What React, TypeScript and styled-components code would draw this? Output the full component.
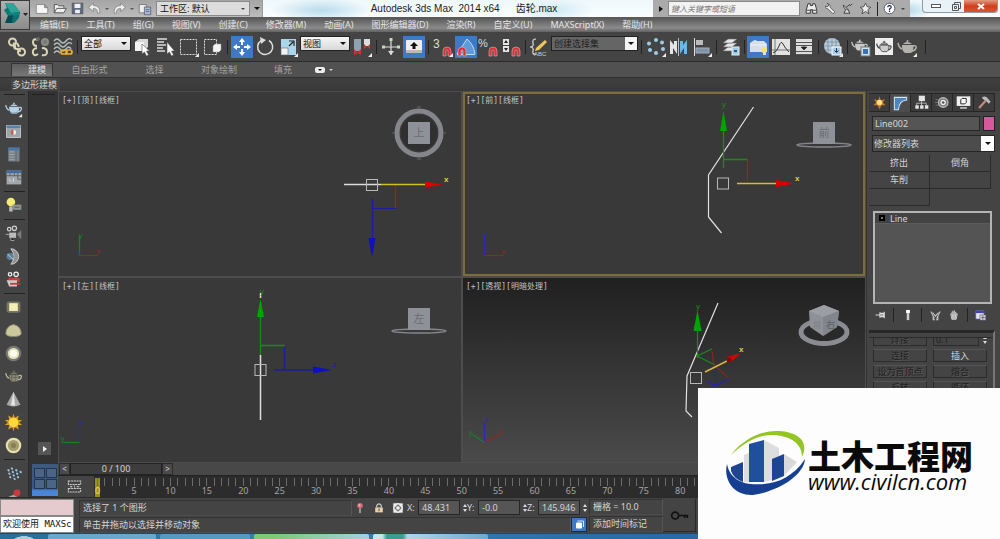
import React from "react";
import styled, { createGlobalStyle, css } from "styled-components";

const GlobalStyle = createGlobalStyle`
  *, *::before, *::after { box-sizing: border-box; }
  body {
    margin: 0;
    background: #444;
    color: #d4d4d4;
    font: 10px/12px "Noto Sans", "Noto Sans CJK SC", sans-serif;
  }
  button, input, select { font: inherit; color: inherit; border-radius: 0; }
  button { padding: 0; border: 0; background: none; }
`;

/* ---------- icons, drawn on a 22 x 22 grid ---------- */

const magnet = (
  <path d="M11 20v-5a4 4 0 0 1 8 0v5h-3v-5a1 1 0 0 0-2 0v5z" fill="#d8343c" stroke="#e8b0b0" strokeWidth="0.6" />
);
const teapot = (
  <>
    <path d="M6 9h11c1 4 0 6-2 8H9c-3-2-3-5-3-8z" />
    <path d="M7 8q4-4 9 0z" />
    <circle cx="11.500" cy="5" r="1" />
    <path d="M6 13Q3 12 2 7M17 10q4-1 3 2t-4 3" fill="none" stroke="currentColor" strokeWidth="1.500" />
  </>
);
const corner = <path d="M21 17v4h-4z" fill="#eee" />;

const icons: Record<string, React.ReactNode> = {
  link: (
    <g fill="none" stroke="#ddd6b8" strokeWidth="2">
      <rect x="3" y="2.500" width="7" height="7" rx="3.500" /><rect x="12" y="12.500" width="7" height="7" rx="3.500" />
      <path d="M7.500 6.500l2 5M8 10q0 3 3 3t3 3M11 7l2 4" />
    </g>
  ),
  unlink: (
    <g fill="none" strokeWidth="2">
      <path d="M9 4Q4 2 4 6t4 4M13 12q5 0 5 4t-5 3" stroke="#ddd6b8" />
      <path d="M8 12q-5 1-4 5t5 1" stroke="#ddd6b8" /><circle cx="16" cy="6" r="3" fill="#777" stroke="#8b8b88" /><circle cx="9" cy="3" r="1" stroke="#666" />
    </g>
  ),
  bind: (
    <g fill="none">
      <path d="M2 5q3-4 6 0t6 0 6-1M2 9q3-4 6 0t6 0 6-1M2 13q3-4 6 0t6 0 5 0M2 17q3-4 6 0" stroke="#b4bec1" strokeWidth="1.300" />
      <rect x="9" y="14" width="6" height="4" rx="2" stroke="#eeb02a" strokeWidth="1.700" />
      <rect x="14" y="14" width="6" height="4" rx="2" stroke="#eeb02a" strokeWidth="1.700" />
    </g>
  ),
  pick: (
    <><path d="M3 6l4-3h9v8l-4 4H3z" fill="#d7d7d7" /><path d="M3 6h9v9H3z" fill="#f3f3f3" />
      <path d="M10 8v10l2.500-2 2 4 2-1-2-4h3z" fill="#fff" stroke="#555" strokeWidth="0.600" /></>
  ),
  pickList: (
    <><path d="M2 3h10M2 6h7M2 9h9M2 12h6M2 15h8" stroke="#ddd" strokeWidth="1.300" />
      <path d="M12 6v12l2.500-2 2 4 2-1-2-4h3z" fill="#fff" stroke="#555" strokeWidth="0.600" /></>
  ),
  region: <><rect x="2.500" y="3.500" width="16" height="15" fill="none" stroke="#ddd" strokeDasharray="2 1" />{corner}</>,
  crossing: (
    <><rect x="3.500" y="3.500" width="12" height="15" fill="none" stroke="#ddd" strokeDasharray="2 1" />
      <path d="M12 10l2-2h6v6l-2 2h-6z" fill="#f4f4f4" stroke="#999" strokeWidth="0.500" /></>
  ),
  move: (
    <g fill="#fff"><path d="M11 2l3 4h-2v3h-2V6H8zM11 20l3-4h-2v-3h-2v3H8zM2 11l4-3v2h3v2H6v2zM20 11l-4-3v2h-3v2h3v2z" /></g>
  ),
  rotate: <><path d="M15 4.500A7.500 7.500 0 1 1 7 4.700" fill="none" stroke="#ddd" strokeWidth="1.500" /><path d="M6 1l6 3-5 4z" fill="#ddd" /></>,
  scale: (
    <><rect x="4" y="3" width="15" height="16" fill="#a9d6ec" /><rect x="4" y="12" width="7" height="7" fill="#f2f2f2" stroke="#666" strokeWidth="0.600" />
      <path d="M12 10l4-4M12 5h5v5" stroke="#222" strokeWidth="1.200" fill="none" />{corner}</>
  ),
  pivot: (
    <><rect x="3" y="3" width="7" height="12" fill="#8fa0ae" /><path d="M3 19v-6l3.500 3.500L10 13v6l-3.500-2z" fill="#c33" />
      <rect x="13" y="3" width="6" height="7" fill="#ddd" /><path d="M13 13V8l3 3 3-3v5l-3-2z" fill="#c33" />{corner}</>
  ),
  manipulate: (
    <><path d="M11 4v15M4 11h15" stroke="#ddd" strokeWidth="1.200" />
      <g fill="#bfe0b4"><rect x="9.500" y="2" width="3" height="3" /><rect x="2" y="9.500" width="3" height="3" /><rect x="17" y="9.500" width="3" height="3" /></g>
      <path d="M8 15h6l-3 4z" fill="#ddd" /></>
  ),
  keyboard: (
    <><rect x="3" y="4" width="16" height="13" rx="1" fill="#eee" /><path d="M3 14h16v3H3z" fill="#bbb" />
      <path d="M11 6l4 4h-2.500v3h-3v-3H7z" fill="#111" /></>
  ),
  snap: <>{magnet}<text x="1" y="12" fontSize="12" fill="#ddd">3</text>{corner}</>,
  angle: (
    <><path d="M2 18L12 3q7 6 8 15z" fill="#5e9bdb" /><path d="M2 18.500h18M2 18L12 3q7 6 8 15" fill="none" stroke="#b9dcf6" /><g transform="translate(-8 0)">{magnet}</g></>
  ),
  percent: <>{magnet}<text x="0" y="11" fontSize="11" fill="#ddd">%</text></>,
  spinnerSnap: (
    <>{magnet}<rect x="2" y="3" width="6" height="6" fill="#e5e5e5" /><rect x="2" y="10" width="6" height="6" fill="#e5e5e5" />
      <path d="M5 4l2 3H3zM5 15l2-3H3z" fill="#222" /></>
  ),
  named: (
    <><path d="M8 3Q4 3 5 7t-3 4q4 0 3 4t3 3" fill="none" stroke="#ddd" strokeWidth="1.200" /><path d="M8 12L17 4l2 2-8 8-4 1z" fill="#efc75c" />
      <text x="6" y="20" fontSize="6" fill="#ccc">ABC</text></>
  ),
  array: (
    <><g fill="#9ecbe6"><circle cx="11" cy="4" r="2" /><circle cx="17" cy="6.500" r="2" /><circle cx="18" cy="13" r="2" />
      <circle cx="11" cy="17" r="2" /><circle cx="5" cy="14" r="2" /><circle cx="4" cy="7.500" r="2" /></g>{corner}</>
  ),
  mirror: <><path d="M10.500 2v18" stroke="#bbb" /><path d="M2 18V4l4 5V5h3v13l-4-6v6z" fill="#e4e4e4" /><path d="M19 18V4l-4 5V5h-3v13l4-6v6z" fill="#6fb6e6" /></>,
  align: (
    <><path d="M3.500 2v18" stroke="#ddd" /><rect x="5" y="4" width="7" height="5" fill="#bbb" /><rect x="5" y="12" width="13" height="5" fill="#7f93a8" stroke="#aab" />{corner}</>
  ),
  layers: (
    <><g fill="#e6e6e6" stroke="#666" strokeWidth="0.600"><path d="M3 15l5-4h9l-5 4z" /><path d="M3 11l5-4h9l-5 4z" /><path d="M3 7l5-4h9l-5 4z" /></g>
      <rect x="12" y="11" width="7" height="8" fill="#9ecbe6" stroke="#eee" /><path d="M14 14h3v2h-3z" fill="#357" /></>
  ),
  ribbon: (
    <><path d="M6 5q2-2 4 0h7l3 3v8H3V7z" fill="#d5dfea" /><path d="M3 9h16" stroke="#eef" /><circle cx="17" cy="14" r="3" fill="#f6e27a" /><path d="M16 16h3v3h-3z" fill="#ddd" /></>
  ),
  curve: (
    <><rect x="2" y="3" width="18" height="16" fill="#e2e2e2" /><path d="M5 3v16M2 14h18" stroke="#777" /><path d="M3 17Q7 16 9 10t4-2 6 8" fill="none" stroke="#333" /></>
  ),
  schematic: (
    <><rect x="3" y="3" width="16" height="16" fill="#dcdcdc" /><path d="M3 6.500h16M3 15.500h16M3 9.500h16M3 18.500h16" fill="none" stroke="#555" /><path d="M11 9v2M8 11h6l-3 3z" fill="#222" stroke="#222" strokeWidth="0.600" /></>
  ),
  material: (
    <><circle cx="10" cy="10" r="8" fill="#b8cbd9" /><path d="M3 6h14M2 10h16M3 14h14M6 3v14M10 2v16M14 3v14" stroke="#7b8fa1" strokeWidth="0.800" />
      <rect x="10" y="11" width="9" height="8" fill="#a8cdea" stroke="#fff" /><path d="M14.500 12v4M12.500 14.500l2 2 2-2" stroke="#234" fill="none" />{corner}</>
  ),
  renderSetup: (
    <><g transform="scale(.85)" fill="#c9c9c9" color="#c9c9c9">{teapot}</g><rect x="11" y="11" width="9" height="9" fill="#cfe2f0" stroke="#777" /><path d="M13 13h5v5h-5z" fill="#3a72b0" /></>
  ),
  renderFrame: <><rect x="2" y="2" width="18" height="17" fill="#ededed" /><g transform="translate(2 2) scale(.8)" fill="#ccc" stroke="#444" color="#444">{teapot}</g></>,
  render: <><g fill="#b4b2ac" color="#b4b2ac">{teapot}</g>{corner}</>,

  teapot: <><g fill="#b9d3e6" color="#b9d3e6">{teapot}</g><path d="M7 14q4 4 9 0-1 3-2 3H9z" fill="#7f97ab" />{corner}</>,
  picture: <><rect x="3" y="4" width="16" height="14" fill="#9aa4ad" stroke="#cfcfcf" /><path d="M3 4h16v3H3z" fill="#5880ac" /><circle cx="11" cy="12" r="3" fill="#c8603f" /><path d="M11 9a3 3 0 0 1 0 6z" fill="#eee" /></>,
  list: <><rect x="5" y="3" width="13" height="16" fill="#77838c" /><path d="M5 3h13v3H5z" fill="#4675ac" /><path d="M6 8h6M6 11h6M6 14h6M6 17h6" stroke="#aaa" /><path d="M14 6v13" stroke="#666" /></>,
  sheet: <><rect x="3" y="3" width="17" height="16" fill="#a3a8ac" /><path d="M3 3h17v3H3z" fill="#3e6ca6" /><path d="M3 9h17M7 6v3M12 6v3M16 6v7M16 13h4" stroke="#555" /><path d="M6 13l2 3M11 12v4" stroke="#ddd" /></>,
  bulb: <><circle cx="8" cy="7" r="5" fill="#f3ec72" /><path d="M6 12h4v6H6z" fill="#bbb" /><rect x="10" y="10" width="10" height="6" fill="#8e9494" /><path d="M12 13h6" stroke="#555" /></>,
  camera: <><g fill="none" stroke="#ccc" strokeWidth="1.500"><circle cx="6" cy="6" r="2" /><circle cx="12" cy="5" r="2.500" /></g><rect x="6" y="10" width="8" height="6" fill="#bbb" /><path d="M15 12l5-5v11z" fill="#7c7c7c" /><path d="M8 16v3h4M2 12h4" stroke="#bbb" /></>,
  sphere: <><path d="M8 2a9 9 0 1 1 0 18 14 14 0 0 0 0-18z" fill="#8d9293" stroke="#d4d4d4" /><circle cx="7" cy="11" r="4" fill="#5d80a0" /><path d="M4 8l7 7" stroke="#ddd" /></>,
  redCamera: <><g fill="none" stroke="#eee" strokeWidth="1.500"><circle cx="7" cy="5" r="2" /><circle cx="14" cy="5" r="2.500" /></g><path d="M5 9h13v5H5z" fill="#c64040" /><path d="M3 12h12v7H6z" fill="#c9c9c9" /><path d="M7 15h12v2H7z" fill="#d43333" /></>,
  plane: <><rect x="3" y="4" width="16" height="13" rx="3" fill="#777765" /><rect x="6" y="6" width="10" height="9" fill="#f4f0b4" /></>,
  dome: <path d="M2 15q0-9 9-11 9 2 9 11-2 3-9 3-7 0-9-3z" fill="#cbc89c" stroke="#8b8a73" />,
  ball: <><circle cx="11" cy="11" r="9" fill="#777" /><circle cx="11" cy="11" r="6.500" fill="#e3e1bb" /><circle cx="11" cy="11" r="4" fill="#fffef0" /></>,
  meshPot: <g fill="#8b8a78" color="#b8b7a4" stroke="#4c4b40" strokeWidth="0.500"><g>{teapot}</g><path d="M7 12h9M9 8v9M13 8v9" /></g>,
  cone: <><path d="M11 2l8 15q-8 4-16 0z" fill="#a8a8a8" /><path d="M11 2l-3 16h5z" fill="#e5e5e5" /></>,
  sun: <><path d="M11 1l1.500 4.500L17 3l-1 5 5 0-3.500 3L21 14l-5 0 1 5-4.500-2.500L11 21l-1.500-4.500L5 19l1-5-5 0 3.500-3L1 8l5 0-1-5 4.500 2.500z" fill="#dfa01c" /><circle cx="11" cy="11" r="5.500" fill="#ffd83a" /></>,
  disc: <><circle cx="11" cy="11" r="9" fill="#e6e0ae" /><circle cx="11" cy="11" r="6.500" fill="#a39c70" /><circle cx="11" cy="11" r="3" fill="#857f59" /></>,
  spray: <g stroke="#9cc3de" strokeWidth="2.200" strokeLinecap="round"><path d="M5 7l.5.500M9 5l.5.500M10 9l.5.500M14 7l.5.500M15 11l.5.500M19 9l.5.500M6 11l.5.500M11 13l.5.500M16 15l.5.500M12 17l.5.500M7 15l.5.500" /></g>,
  joint: <><path d="M4 12l9-4 3 5-9 4z" fill="#aaa" /><circle cx="15" cy="7" r="4" fill="#c93a3a" /></>,

  newFile: <path d="M2 4h13l5 5v9H2zM15 4v5h5" fill="#f6f6f6" stroke="#666" />,
  open: <path d="M2 17V4h5l2 2h8v3M2 17l4-7h15l-4 7z" fill="#eee" stroke="#555" strokeWidth="1.500" />,
  save: <><path d="M2 2h18v18H2z" fill="#5f6c80" stroke="#444" /><path d="M6 3h10v7H6zM7 13h8v6H7z" fill="#f0f0f0" /></>,
  undo: <path d="M1 9l8-7v4q12 0 11 13h-4q1-8-7-8v5z" fill="#eee" stroke="#666" />,
  redo: <path d="M21 9l-8-7v4Q1 6 2 19h4q-1-8 7-8v5z" fill="#eee" stroke="#666" />,
  project: <><path d="M2 4h11v13H2z" fill="#eee" stroke="#555" /><path d="M10 8h10v12H10z" fill="#a8bbd6" stroke="#445" /><path d="M12 12h6M12 15h6" stroke="#446" /></>,
  binoculars: <path d="M5 3h4v3h4V3h4l3 11v5h-7v-6H9v6H2v-5zM3 14h5M14 14h5" fill="#eee" stroke="#333" strokeWidth="1.600" />,
  wrench: <path d="M7 2l3 3-2 3-4-1q0 5 5 5l8 8 3-3-8-8q1-6-5-7z" fill="#f1f1f1" stroke="#444" strokeWidth="1.300" />,
  satellite: <><path d="M4 5q0 8 9 9zM9 9l6-5" fill="#eee" stroke="#333" strokeWidth="1.500" /><path d="M8 13l-3 6h10l-3-5M15 7l4-4" fill="#ddd" stroke="#333" strokeWidth="1.500" /></>,
  star: <path d="M11 2l3 6 6 1-5 4 2 7-6-4-6 4 2-7-5-4 6-1z" fill="#eee" stroke="#444" strokeWidth="1.500" />,
  help: <><circle cx="11" cy="11" r="9" fill="#fff" stroke="#456" strokeWidth="1.500" /><path d="M8 9q0-3 3-3t3 3q0 1-3 3v2M11 15v2" fill="none" stroke="#225" strokeWidth="2" /></>,

  create: <><path d="M11 2l2 6 6-2-3 5 4 4-6 0-3 6-3-6-6 0 4-4-3-5 6 2z" fill="#c9792a" /><circle cx="11" cy="11" r="4" fill="#ffdf80" /></>,
  modify: <path d="M2 2h18v4Q9 7 8 20H2z" fill="#4d86bd" stroke="#cfe4f4" strokeWidth="1.500" />,
  hierarchy: <><rect x="7" y="1" width="9" height="8" fill="#e5e5e5" /><path d="M11 9v3M4 15v-3h14v3M11 12v3" stroke="#ddd" fill="none" /><path d="M2 15h5v5H2zM9 15h5v5H9zM16 15h5v5h-5z" fill="#e5e5e5" /></>,
  motion: <><circle cx="12" cy="11" r="7" fill="#777" stroke="#bbb" strokeWidth="2" /><circle cx="12" cy="11" r="3" fill="#555" stroke="#eee" strokeWidth="2" /><path d="M1 7h4M0 11h4M1 15h4" stroke="#888" /></>,
  display: <><rect x="1" y="2" width="20" height="14" fill="#f0f0f0" /><path d="M7 7l2-2h6v6l-2 2H7z" fill="#fff" stroke="#222" strokeWidth="1.400" /><path d="M6 19h10" stroke="#ddd" strokeWidth="2" /></>,
  hammer: <><path d="M3 19L13 8" stroke="#c58f83" strokeWidth="3" /><path d="M7 4q5-4 9 1l4 5-3 3-4-5-3-1z" fill="#bbb" /></>,

  pin: <path d="M1 11h8M9 6v10M10 8h6v6h-6M17 5v12" stroke="#ddd" strokeWidth="2" fill="#aaa" />,
  tube: <><path d="M8 3h6v5H8z" fill="#fff" /><path d="M9 8h4v11H9z" fill="#ccc" /></>,
  unique: <path d="M3 4l6 12M19 4l-6 12M6 6l5 6 5-6M7 13v5h3M15 13v5h-3" stroke="#ccc" strokeWidth="1.700" fill="none" />,
  trash: <path d="M5 9q6-8 12 0l-2 10H7zM8 9l1 9M11 7v11M14 9l-1 9M7 6l2-3M12 5V2" fill="#999" stroke="#e4e4e4" strokeWidth="1.300" />,
  configure: <><path d="M3 3h14v14H3z" fill="#e8e8f4" stroke="#5555bb" /><path d="M3 3h14v4H3z" fill="#4444aa" /><path d="M10 10h10v9H10z" fill="#ddd" stroke="#447" /><path d="M15 11v7M12 14.500h7" stroke="#333" /></>,
  marker: <><circle cx="11" cy="7" r="5" fill="#d86a78" /><circle cx="10" cy="6" r="2" fill="#f2b8bd" /><path d="M11 12v8" stroke="#ddd" strokeWidth="2" /></>,
  lock: <><path d="M7 10V6q4-5 8 0v4" fill="none" stroke="#ddd" strokeWidth="2" /><rect x="4" y="10" width="14" height="9" fill="#e8cfae" /><path d="M11 12v5" stroke="#654" strokeWidth="2" /></>,
  absolute: <><rect x="2" y="2" width="18" height="18" fill="#eee" /><circle cx="11" cy="11" r="4.500" fill="none" stroke="#444" strokeWidth="1.500" /><path d="M2 8V2h6M14 2h6v6M2 14v6h6M14 20h6v-6M11 4v4M11 14v4M4 11h4M14 11h4" fill="none" stroke="#666" strokeWidth="1.500" strokeDasharray="2 1" /></>,
  copy: <><rect x="4" y="7" width="12" height="12" rx="2" fill="#fff" /><path d="M7 4h12v12" stroke="#d8e8fa" strokeWidth="2" fill="none" /></>,
  key: <><circle cx="6" cy="11" r="4" fill="none" stroke="#111" strokeWidth="2" /><path d="M10 11h11M17 11v3M20 11v3" stroke="#111" strokeWidth="2" /></>,
  track: <><path d="M2 3h18v5H2zM2 14h18v5H2z" fill="none" stroke="#ccc" strokeDasharray="3 1" strokeWidth="1.500" /><path d="M6 10v3M11 9v4M16 10v3M4 11h4M14 11h4" stroke="#ccc" /></>,
};

const Svg = styled.svg<{ $size: number }>`
  display: block;
  flex: none;
  width: ${(p) => p.$size}px;
  height: ${(p) => p.$size}px;
  font-family: "Liberation Sans", sans-serif;
`;
const Icon = ({ name, size = 22 }: { name: string; size?: number }) => (
  <Svg $size={size} viewBox="0 0 22 22" aria-hidden="true">{icons[name]}</Svg>
);

/* ---------- frame ---------- */

const Window = styled.div`
  display: flex;
  flex-direction: column;
  height: 100vh;
  min-height: 480px;
  overflow: hidden;
  position: relative;
`;
const Header = styled.header`
  display: grid;
  grid-template-columns: 30px 1fr;
  grid-template-rows: 17px 15px;
  flex: none;
  background: linear-gradient(#5a5a5a 17px, #595959 18px, #8b8b8b 28px, #626262 32px);
`;
const AppButton = styled.button`
  grid-row: 1 / 3;
  height: 30px;
  background: linear-gradient(#b2b2b2, #8b8b8b);
  border: 1px solid #3a3a3a;
  svg { display: block; }
`;
const TitleBar = styled.div`
  display: grid;
  grid-template-columns: 233px 1fr auto 90px;
  background:
    radial-gradient(ellipse 50px 12px at 30% 60%, #b8dcec, transparent),
    radial-gradient(ellipse 40px 12px at 54% 60%, #cfeaf4, transparent),
    radial-gradient(ellipse 30px 10px at 90% 60%, #a9d5e8, transparent),
    linear-gradient(#eef8fb, #fafdfe);
  overflow: hidden;
`;
const QuickBar = styled.div`
  display: flex;
  align-items: center;
  gap: 4px;
  padding-left: 5px;
  background: linear-gradient(#a5a5a5, #bcbcbc);
  border-right: 1px solid #999;
`;
const PlainButton = styled.button`
  display: flex;
  align-items: center;
  justify-content: center;
`;
const Caret = styled.span<{ $tone?: string; $size?: number }>`
  width: 0;
  height: 0;
  border: ${(p) => p.$size ?? 3}px solid transparent;
  border-top-color: ${(p) => p.$tone ?? "#111"};
  border-bottom: 0;
`;
const Title = styled.h1`
  margin: 0;
  padding-left: 12px;
  display: flex;
  justify-content: center;
  gap: 16px;
  font: 400 10px/17px "Liberation Sans", "Noto Sans CJK SC", sans-serif;
  color: #1c1c1c;
  white-space: nowrap;
`;
const InfoCenter = styled.div`
  display: flex;
  align-items: center;
  gap: 5px;
  padding: 0 5px 0 6px;
  background: #ababab;
`;
const Play = styled.span`
  border: 3px solid transparent;
  border-left: 4px solid #111;
  border-right: 0;
`;
const Search = styled.input`
  width: 132px;
  height: 15px;
  padding: 0 2px;
  border: 1px solid #8a8a8a;
  background: #f2f2f2;
  color: #333;
  font-size: 8px;
  font-style: italic;
  &::placeholder { color: #777; opacity: 1; }
`;
const WindowButtons = styled.div`
  display: grid;
  grid-template-columns: 26px 15px 1fr;
  height: 13px;
  margin: 0 2px 0 12px;
  border: 1px solid #8d9ba3;
  border-top: 0;
  border-radius: 0 0 4px 4px;
  overflow: hidden;
  background: #e9f3f7;
`;
const WindowButton = styled.button<{ $close?: boolean }>`
  display: grid;
  place-items: center;
  ${(p) => p.$close && css`background: linear-gradient(#e39a85, #cf3f1e 50%, #d9562f);`}
`;

const Menu = styled.nav`
  display: flex;
  gap: 18px;
  padding-left: 10px;
  button {
    color: #e4e4e4;
    font-size: 9px;
    line-height: 15px;
    white-space: nowrap;
  }
`;

/* ---------- main toolbar ---------- */

const Toolbar = styled.div`
  display: flex;
  align-items: center;
  gap: 1px;
  flex: none;
  height: 30px;
  padding-left: 6px;
  background: #444;
  border-bottom: 1px solid #2b2b2b;
`;
const ToolButton = styled.button<{ $on?: boolean }>`
  flex: none;
  width: 22px;
  height: 22px;
  ${(p) => p.$on && css`background: #3f78c4;`}
`;
const Divider = styled.span<{ $w: number }>`
  flex: none;
  width: ${(p) => p.$w}px;
  height: 14px;
  background: linear-gradient(#222, #222) center / 1px 100% no-repeat;
`;
const SelectBox = styled.span<{ $w: number; $dark?: boolean }>`
  display: grid;
  flex: none;
  align-items: center;
  align-self: flex-start;
  width: ${(p) => p.$w}px;
  height: 15px;
  margin-top: 4px;
  border: 1px solid #222;
  background: ${(p) => (p.$dark ? "linear-gradient(90deg, #656565 86%, #f4f4f4 86%)" : "linear-gradient(#f6f6f6, #d8d8d8)")};
  color: ${(p) => (p.$dark ? "#1d1d1d" : "#111")};
  select, span { grid-area: 1 / 1; }
  select {
    appearance: none;
    width: 100%;
    height: 13px;
    padding: 0 2px;
    border: 0;
    background: none;
    font-size: 9px;
    line-height: 13px;
  }
  span { justify-self: end; margin-right: 3px; pointer-events: none; }
`;
const Select = ({ label, value, width, dark }: { label: string; value: string; width: number; dark?: boolean }) => (
  <SelectBox $w={width} $dark={dark}>
    <select aria-label={label}><option>{value}</option></select>
    <Caret />
  </SelectBox>
);
const WorkspaceSelect = styled.span`
  display: grid;
  align-items: center;
  flex: none;
  width: 94px;
  height: 15px;
  border: 1px solid #8a8a8a;
  background: #dcdcdc;
  select, span { grid-area: 1 / 1; }
  select { appearance: none; border: 0; background: none; padding: 0 3px; color: #111; font-size: 9px; line-height: 13px; width: 100%; height: 13px; }
  span { justify-self: end; margin-right: 4px; pointer-events: none; }
`;

/* ---------- ribbon ---------- */

const RibbonTabs = styled.div`
  display: flex;
  align-items: center;
  flex: none;
  height: 15px;
  padding-left: 11px;
  background: #515151;
`;
const RibbonTab = styled.button<{ $on?: boolean; $w: number }>`
  width: ${(p) => p.$w}px;
  height: 13px;
  font-size: 9px;
  line-height: 13px;
  color: ${(p) => (p.$on ? "#e0e0e0" : "#a4a4a4")};
  ${(p) => p.$on && css`background: linear-gradient(#5d5d5d, #777); border: 1px solid #333; border-bottom: 0; line-height: 12px; padding-left: 10px;`}
`;
const Pill = styled.button`
  display: flex;
  align-items: center;
  gap: 4px;
  margin-left: 4px;
  i { display: grid; place-items: center; width: 10px; height: 6px; border-radius: 2px; background: #eee; }
`;
const RibbonPanel = styled.div`
  flex: none;
  height: 14px;
  padding-left: 11px;
  background: linear-gradient(#404040, #383838);
  border-top: 1px solid #303030;
  font-size: 9px;
  line-height: 13px;
  span { display: inline-block; padding: 0 3px 0 1px; background: #454545; }
`;

/* ---------- body ---------- */

const Body = styled.main`
  display: grid;
  grid-template-columns: 29px 29px minmax(0, 1fr) 134px;
  flex: 1;
  min-height: 0;
`;
const LightBar = styled.div`
  overflow: hidden;
  padding: 3px 0 0 4px;
  background: #444;
  border-right: 1px solid #2a2a2a;
`;
const Grip = styled.div`
  height: 3px;
  margin-right: 3px;
  border-top: 1px solid #222;
`;
const LightButton = styled.button`
  display: flex;
  align-items: center;
  width: 22px;
  height: 23px;
`;
const Rule = styled.div`
  height: 5px;
  width: 21px;
  background: linear-gradient(#222, #222) center / 100% 1px no-repeat;
`;
const LayoutBar = styled.div`
  display: flex;
  flex-direction: column;
  min-height: 0;
  padding: 3px 0 1px 3px;
  background: #333;
`;
const Expand = styled.button`
  display: grid;
  place-items: center;
  width: 13px;
  height: 13px;
  margin: auto 0 9px 6px;
  background: #555;
  span { border-left-color: #eee; }
`;
const LayoutButton = styled.button`
  display: grid;
  grid-template-columns: 11px 11px;
  grid-auto-rows: 10px;
  gap: 1px;
  place-content: start center;
  height: 32px;
  padding-top: 4px;
  background: linear-gradient(#3e5a80, #36588a 75%, #4a86d8 85%);
  i { background: #4d6584; border: 1px solid #25344a; }
`;

const Stage = styled.div`
  display: flex;
  flex-direction: column;
  min-width: 0;
  min-height: 0;
  background: #444;
`;
const Views = styled.div`
  display: grid;
  grid-template-columns: 1fr 1fr;
  grid-template-rows: 1fr 1fr;
  gap: 2px;
  flex: 1;
  min-height: 0;
  padding: 1px;
  background: #4d4d4d;
`;
const View = styled.section<{ $active?: boolean; $shaded?: boolean }>`
  position: relative;
  min-height: 0;
  background: ${(p) => (p.$shaded ? "linear-gradient(#202020, #4a4a4a)" : "#393939")};
  outline: ${(p) => (p.$active ? "2px solid #7d6d38" : "0")};
  outline-offset: -2px;
`;
const ViewLabel = styled.h2`
  position: absolute;
  top: 3px;
  left: 3px;
  margin: 0;
  font: 400 8px/11px "DejaVu Sans Mono", "Noto Sans CJK SC", monospace;
  color: #c4c4c4;
`;
const Scene = styled.svg`
  position: absolute;
  inset: 0;
  width: 100%;
  height: 100%;
  font: 8px "Liberation Sans", "Noto Sans CJK SC", sans-serif;
`;

const Tripod = ({ x, y, left, kind }: { x: number; y: number; left?: boolean; kind: "top" | "front" | "left" | "persp" }) => {
  const up = kind === "top" ? "#18802a" : "#2a2ab4";
  const side = kind === "left" ? "#18802a" : "#962424";
  if (kind === "persp")
    return (
      <g fill="none" strokeWidth="1.200">
        <path d={`M${x} ${y}v-20`} stroke="#2a2ab4" /><path d={`M${x} ${y}l15-8`} stroke="#962424" /><path d={`M${x} ${y}l-12-8`} stroke="#18802a" />
        <text x={x} y={y - 21} fill="#2a2ab4">z</text><text x={x + 14} y={y - 9} fill="#962424">x</text><text x={x - 16} y={y - 8} fill="#18802a">y</text>
      </g>
    );
  return (
    <g fill="none" strokeWidth="1.200">
      <path d={`M${x} ${y}v-20`} stroke={up} />
      <path d={`M${x} ${y}h${left ? -17 : 19}`} stroke={side} />
      <text x={x - 1} y={y - 18} fill={up}>{kind === "top" ? "y" : "z"}</text>
      <text x={left ? x - 19 : x + 17} y={y - 2} fill={side}>{left ? "y" : "x"}</text>
      {kind === "top" && <text x={x - 2} y={y - 1} fill="#2a3a90">z</text>}
    </g>
  );
};
const FaceCube = ({ x, y, face, ring }: { x: number; y: number; face: string; ring?: boolean }) => (
  <g>
    {ring ? (
      <>
        <circle cx={x} cy={y} r="18" fill="#303030" /><circle cx={x} cy={y} r="22" fill="none" stroke="#85868c" strokeWidth="5" />
        <path d={`M${x - 2} ${y - 26}h4M${x - 2} ${y + 26}h4M${x - 27} ${y}h2M${x + 25} ${y}h2`} stroke="#666" />
      </>
    ) : (
      <ellipse cx={x} cy={y + 12} rx="27" ry="2" fill="none" stroke="#85868c" strokeWidth="1.500" />
    )}
    <rect x={x - 11} y={y - 11} width="22" height="22" fill="#8f9198" />
    <text x={x} y={y + 4} fontSize="11" textAnchor="middle" fill="#6a6c74">{face}</text>
  </g>
);
const Handle = ({ x, y }: { x: number; y: number }) => (
  <rect x={x - 5.5} y={y - 5.5} width="11" height="11" fill="none" stroke="#b8b8b8" />
);

const TopScene = () => (
  <Scene viewBox="0 0 402 184">
    <path d="M336.500 93v23" stroke="#962424" strokeWidth="1.300" />
    <path d="M285 92.500H322" stroke="#ddd" strokeWidth="1.500" /><path d="M322 92.500H366" stroke="#d0c020" strokeWidth="1.500" />
    <path d="M366 89.500l18 3-18 3z" fill="#d80000" />
    <path d="M313.500 107v40M313 116.500h24" stroke="#1c1c9c" strokeWidth="1.200" fill="none" /><path d="M309.500 146h7l-3.500 19z" fill="#1010c0" />
    <Handle x={313} y={93} /><text x="385" y="90" fill="#e0d030" fontWeight="bold">x</text>
    <FaceCube x={360} y={41} face="上" ring /><Tripod x={20.5} y={163.5} kind="top" />
  </Scene>
);
const FrontScene = () => (
  <Scene viewBox="0 0 402 184">
    <path d="M284.500 67v22" stroke="#962424" strokeWidth="1.300" />
    <path d="M290.500 15L245.500 83v42l13 16" stroke="#e0e0e0" fill="none" strokeWidth="1.200" />
    <path d="M260.500 76V38M260 67.500h24" stroke="#1a8a1a" fill="none" strokeWidth="1.300" /><path d="M257 39l3.500-20 3.500 20z" fill="#00a400" />
    <path d="M274 91.500h41" stroke="#d0c020" strokeWidth="1.500" /><path d="M313 88l19 3.500-19 3.500z" fill="#d80000" />
    <Handle x={260} y={91.500} /><text x="259" y="15" fill="#1a8a1a">y</text><text x="332" y="89" fill="#e0d030" fontWeight="bold">x</text>
    <FaceCube x={361} y={41} face="前" /><Tripod x={21.5} y={163.5} kind="front" />
  </Scene>
);
const LeftScene = () => (
  <Scene viewBox="0 0 402 184">
    <path d="M225.500 67v24M215 92h40" stroke="#1c1c9c" strokeWidth="1.300" fill="none" />
    <path d="M201.500 39v39M201 67.500h25" stroke="#1a8a1a" fill="none" strokeWidth="1.300" /><path d="M198 39l3.500-18 3.500 18z" fill="#00a400" />
    <path d="M201.500 77v65M201.500 15v5" stroke="#ddd" strokeWidth="1.500" />
    <path d="M254 88.500l19 3.500-19 3.500z" fill="#1010c0" /><Handle x={201.5} y={92} />
    <text x="201" y="16" fill="#1a8a1a">y</text><text x="273" y="89" fill="#1c1cb0">z</text>
    <FaceCube x={360} y={41} face="左" /><Tripod x={20.5} y={164.5} left kind="left" />
  </Scene>
);
const PerspectiveScene = () => (
  <Scene viewBox="0 0 402 184">
    <path d="M255 25L224 98l-1 35 6 6" stroke="#e0e0e0" fill="none" strokeWidth="1.200" />
    <path d="M234.500 80V52M249 71l-15 7 18 9" stroke="#1a8a1a" fill="none" strokeWidth="1.200" /><path d="M230.500 53l4-21 4 21z" fill="#00a400" />
    <path d="M249 73l2 15M258 93l8 7M252 88l10 9" stroke="#962424" fill="none" /><path d="M252.500 90v19M266 101l-14 7-8-5" stroke="#2424b4" fill="none" strokeWidth="1.300" />
    <path d="M242 94l24-12" stroke="#d8b840" strokeWidth="1.500" /><path d="M264 79l14-4-11 10z" fill="#d80000" /><circle cx="266" cy="82" r="2.500" fill="#701010" />
    <Handle x={233} y={100} /><text x="233" y="31" fill="#1a8a1a">y</text><text x="276" y="74" fill="#e0d030" fontWeight="bold">x</text>
    <ellipse cx="361" cy="54" rx="23" ry="11.500" fill="#292929" stroke="#8b8c92" strokeWidth="5" />
    <path d="M361 27l15 6-2 16-14 9-13-9-1-16z" fill="#8f9198" /><path d="M361 27l15 6-16 6-14-6z" fill="#9c9ea5" /><path d="M360 39v19l14-9 2-16z" fill="#83858c" />
    <text x="363" y="50" fontSize="9" fill="#5d5f66">右</text><text x="350" y="50" fontSize="8" fill="#7b7d85">前</text>
    <Tripod x={21.5} y={164.5} kind="persp" />
  </Scene>
);

const TimeSlider = styled.div`
  display: grid;
  grid-template-columns: 11px 92px 11px 1fr;
  align-items: center;
  height: 13px;
  padding-left: 1px;
  background: #484848;
  border-bottom: 1px solid #222;
  button { height: 12px; background: #4a4a4a; border: 1px solid #2c2c2c; font-size: 8px; line-height: 10px; }
  label { display: grid; height: 12px; }
  label > * { grid-area: 1 / 1; }
  output { text-align: center; font-size: 9px; line-height: 12px; pointer-events: none; z-index: 1; }
  input { appearance: none; width: 100%; height: 12px; margin: 0; background: none; }
  input::-webkit-slider-thumb { appearance: none; width: 92px; height: 12px; border: 1px solid #222; background: #3d3d3d; }
`;
const TrackBar = styled.div`
  display: grid;
  grid-template-columns: 36px 1fr 36px;
  height: 21px;
  background: #2c2c2c;
`;
const TrackButton = styled.button`
  display: grid;
  place-items: center;
  padding-right: 4px;
  background: #444;
`;
const Frames = styled.div`
  display: flex;
  padding-top: 2px;
`;
const Frame = styled.div<{ $current?: boolean }>`
  display: flex;
  flex: 1;
  flex-direction: column;
  align-items: center;
  min-width: 0;
  width: 0;
  font-size: 9px;
  line-height: 10px;
  color: #a6a6a6;
  &::before { content: ""; width: 1px; height: 8px; flex: none; background: #6c6c6c; }
  ${(p) => p.$current && css`
    background: linear-gradient(90deg, transparent 1px, #9a9020 1px, #9a9020 calc(100% - 1px), transparent 0);
    color: #f0e060;
  `}
`;

/* ---------- command panel ---------- */

const Panel = styled.aside`
  display: flex;
  flex-direction: column;
  min-height: 0;
  overflow: hidden;
  padding: 2px 5px 0 2px;
  background: #444;
  border-left: 1px solid #333;
`;
const PanelTabs = styled.div`
  display: grid;
  grid-template-columns: repeat(6, 1fr);
  flex: none;
  height: 19px;
`;
const PanelTab = styled.button<{ $on?: boolean }>`
  display: grid;
  place-items: center;
  border: 1px solid #262626;
  border-width: 1px 1px ${(p) => (p.$on ? 0 : 1)}px 0;
  background: ${(p) => (p.$on ? "#4c4c4c" : "#3c3c3c")};
`;
const NameRow = styled.div`
  display: grid;
  grid-template-columns: 1fr 12px;
  gap: 3px;
  flex: none;
  height: 15px;
  margin: 4px 0 0 3px;
  input { min-width: 0; padding: 0 2px; border: 1px solid #262626; background: #555; font-size: 9px; line-height: 12px; }
  button { background: #d8589c; border: 1px solid #222; }
`;
const ModifierList = styled.span`
  display: grid;
  grid-template-columns: 1fr 13px;
  flex: none;
  height: 17px;
  margin: 4px 0 2px 3px;
  border: 1px solid #262626;
  background: #4c4c4c;
  select { grid-area: 1 / 1 / 2 / 3; appearance: none; border: 0; padding: 0 1px; background: none; font-size: 9px; line-height: 15px; }
  span { grid-area: 1 / 2; display: grid; place-items: center; background: #fff; pointer-events: none; }
  i { border: 3px solid transparent; border-top-color: #111; border-bottom: 0; }
`;
const Modifiers = styled.div`
  display: grid;
  grid-template-columns: 1fr 1fr;
  grid-auto-rows: 17px;
  flex: none;
  margin-right: 4px;
  padding-top: 1px;
  button { border: solid #2a2a2a; border-width: 0 1px 1px 0; font-size: 9px; line-height: 16px; }
`;
const Stack = styled.ul`
  flex: none;
  height: 93px;
  margin: 5px 3px 0 4px;
  padding: 0;
  border: 2px solid #b4b4b4;
  background: #545454;
  list-style: none;
  li { display: flex; align-items: center; gap: 5px; height: 11px; padding-left: 4px; background: #434343; border-bottom: 1px solid #5c5c5c; font-size: 9px; line-height: 11px; }
  i { width: 6px; height: 6px; background: radial-gradient(#777 1px, #000 1px); }
`;
const StackTools = styled.div`
  display: flex;
  align-items: center;
  justify-content: space-between;
  flex: none;
  height: 22px;
  padding: 0 8px 0 6px;
`;
const Rollout = styled.div`
  display: grid;
  grid-template-columns: 1fr 1fr;
  grid-auto-rows: 13px;
  gap: 3px 6px;
  align-content: start;
  flex: 1;
  min-height: 0;
  overflow: hidden;
  margin-top: 4px;
  padding: 0 6px 0 4px;
  border-top: 3px solid #272727;
  background: linear-gradient(#444, #444 4px, #2a2a2a 4px, #2a2a2a 5px, #444 5px);
  border-right: 2px solid #777;
`;
const RolloutClip = styled.div`
  display: grid;
  grid-template-columns: 1fr 1fr;
  gap: 6px;
  grid-column: 1 / 3;
  align-items: end;
  align-content: end;
  overflow: hidden;
  height: 8px;
  margin-top: 5px;
`;
const RolloutButton = styled.button<{ $off?: boolean }>`
  height: 13px;
  border: 1px solid #2c2c2c;
  border-top-color: #555;
  font-size: 9px;
  line-height: 11px;
  overflow: hidden;
  white-space: nowrap;
  ${(p) => p.$off && css`color: #1e1e1e; text-shadow: 1px 1px #5a5a5a;`}
`;
const Threshold = styled.span`
  display: grid;
  grid-template-columns: 1fr 8px;
  align-items: center;
  height: 13px;
  input { min-width: 0; height: 13px; padding: 0 2px; border: 1px solid #2c2c2c; background: #444; color: #222; font-size: 9px; line-height: 11px; }
`;

/* ---------- status area ---------- */

const Status = styled.footer`
  display: grid;
  grid-template-columns: 74px minmax(0, 1fr) 76px 33px 304px;
  flex: none;
  height: 36px;
  padding-top: 1px;
  background: #444;
  border-top: 1px solid #2a2a2a;
`;
const Listener = styled.div`
  display: grid;
  grid-template-rows: 1fr 1fr;
  input { min-width: 0; width: 100%; border: 1px solid #888; background: #fff; padding: 0 2px; font: 9px/15px "DejaVu Sans Mono", "Noto Sans CJK SC", monospace; color: #111; }
  input:first-child { background: #e5cbcd; }
`;
const Prompt = styled.div`
  display: grid;
  grid-template-rows: 17px 17px;
  padding-left: 5px;
`;
const StatusRow = styled.div`
  display: flex;
  align-items: center;
  min-width: 0;
`;
const Message = styled.p`
  flex: 1;
  min-width: 0;
  height: 16px;
  margin: 0;
  padding: 0 3px;
  border: 1px solid #333;
  border-right-color: #555;
  border-bottom-color: #4c4c4c;
  overflow: hidden;
  font-size: 9px;
  line-height: 14px;
  white-space: nowrap;
`;
const StatusIcons = styled.span`
  display: flex;
  gap: 7px;
  padding: 0 3px 0 2px;
`;
const Coordinate = styled.label`
  display: grid;
  grid-template-columns: 11px 42px 7px;
  align-items: center;
  font-size: 9px;
  input { min-width: 0; height: 15px; padding: 0 3px; border: 1px solid #262626; background: #555; font-size: 9px; line-height: 13px; }
`;
const Spinner = styled.span`
  display: grid;
  gap: 2px;
  justify-items: end;
  &::before, &::after { content: ""; border: 2px solid transparent; }
  &::before { border-bottom: 3px solid #ddd; border-top: 0; }
  &::after { border-top: 3px solid #ddd; border-bottom: 0; }
`;
const TagButton = styled.button`
  display: grid;
  place-items: center;
  width: 16px;
  height: 15px;
  background: #3f78c4;
  border: 1px solid #1b2b45;
`;
const Side = styled.div`
  display: grid;
  grid-template-rows: 17px 17px;
  padding-left: 2px;
`;
const KeyButton = styled.button`
  display: grid;
  place-items: center;
  height: 33px;
  border: solid #2a2a2a;
  border-width: 0 1px 1px 0;
`;

const TaskBar = styled.div`
  display: flex;
  flex: none;
  height: 6px;
  padding-left: 48px;
  gap: 4px;
  background:
    radial-gradient(ellipse 16px 8px at 24px 8px, #a9cbd8 70%, transparent 75%),
    linear-gradient(90deg, #2b6e96, #3583ae 30%, #2a6aa6 65%, #2460a0);
  border-top: 1px solid #1c4a6c;
`;
const Task = styled.span<{ $w: number; $tone: string }>`
  width: ${(p) => p.$w}px;
  border-radius: 2px 2px 0 0;
  background: ${(p) => p.$tone};
`;

/* ---------- sponsor logo ---------- */

const Brand = styled.a`
  position: absolute;
  right: 0;
  bottom: 0;
  display: flex;
  align-items: center;
  width: 302px;
  height: 151px;
  padding: 2px 0 0 26px;
  background: #fdfdfd;
  color: #0a0a0a;
  text-decoration: none;
  white-space: nowrap;
`;
const BrandMark = styled.svg`
  width: 84px;
  height: 70px;
  flex: none;
`;
const BrandText = styled.span`
  display: flex;
  flex-direction: column;
  strong { font: 900 33px/32px "Noto Sans CJK SC", sans-serif; }
  em { font: italic 500 22px/20px "Open Sans", sans-serif; }
`;

/* ---------- data ---------- */

const menus = ["编辑(E)", "工具(T)", "组(G)", "视图(V)", "创建(C)", "修改器(M)", "动画(A)", "图形编辑器(D)", "渲染(R)", "自定义(U)", "MAXScript(X)", "帮助(H)"];
const lightTools = [
  ["teapot", "picture", "list", "sheet"],
  ["bulb"],
  ["camera", "sphere", "redCamera"],
  ["plane", "dome", "ball", "meshPot", "cone", "sun", "disc"],
  ["spray", "joint"],
];
const tasks = [
  { w: 108, tone: "#6aa9cb" },
  { w: 90, tone: "#5799bf" },
  { w: 115, tone: "linear-gradient(90deg, #7fc878 20%, #a9cfe2)" },
  { w: 115, tone: "linear-gradient(90deg, #c9e4e8 8%, #3c9c94 12%, #3c9c94 26%, #b5d4e4 30%, #6fa8cc)" },
];

const Tools = ({ names, on = [] }: { names: string[]; on?: string[] }) => (
  <>{names.map((n) => <ToolButton key={n} $on={on.includes(n)} aria-label={n}><Icon name={n} /></ToolButton>)}</>
);

export default function App() {
  return (
    <>
      <GlobalStyle />
      <Window>
        <Header>
          <AppButton aria-label="3ds Max">
            <svg width="28" height="28" viewBox="0 0 28 28">
              <path d="M4 2h8l7 9-1 6-5 5H4l3-7-4-6 3-2z" fill="#0d7272" />
              <path d="M4 2h8l7 9-9 1z" fill="#2aa597" /><path d="M3 9l7 3 9-1-1 3-8 1z" fill="#13837e" /><path d="M7 15l5-1-1 8H4z" fill="#064c50" />
              <path d="M22 12h5l-2.500 3z" fill="#222" />
            </svg>
          </AppButton>
          <TitleBar>
            <QuickBar>
              <PlainButton aria-label="new"><Icon name="newFile" size={14} /></PlainButton>
              <PlainButton aria-label="open"><Icon name="open" size={14} /></PlainButton>
              <PlainButton aria-label="save"><Icon name="save" size={13} /></PlainButton>
              <PlainButton aria-label="undo"><Icon name="undo" size={13} /></PlainButton>
              <Caret $tone="#555" $size={2} />
              <PlainButton aria-label="redo"><Icon name="redo" size={13} /></PlainButton>
              <Caret $tone="#555" $size={2} />
              <PlainButton aria-label="project"><Icon name="project" size={14} /></PlainButton>
              <WorkspaceSelect>
                <select aria-label="workspace"><option>工作区: 默认</option></select>
                <Caret $tone="#444" $size={2} />
              </WorkspaceSelect>
              <Caret />
            </QuickBar>
            <Title><span>Autodesk 3ds Max&nbsp; 2014 x64</span><span>齿轮.max</span></Title>
            <InfoCenter>
              <Play />
              <Search aria-label="search" placeholder="键入关键字或短语" />
              {["binoculars", "wrench", "satellite", "star"].map((n) => (
                <PlainButton key={n} aria-label={n}><Icon name={n} size={13} /></PlainButton>
              ))}
              <Divider $w={1} />
              <PlainButton aria-label="help"><Icon name="help" size={13} /></PlainButton>
              <Caret $tone="#444" $size={2} />
            </InfoCenter>
            <WindowButtons>
              <WindowButton aria-label="minimize"><svg width="10" height="5"><rect x="0.500" y="0.500" width="9" height="3" fill="#fff" stroke="#555" /></svg></WindowButton>
              <WindowButton aria-label="restore"><svg width="9" height="9"><path d="M2.500 2.500v-2h6v6h-2M.5 2.500h6v6h-6zM2.500 4.500h2v2h-2z" fill="none" stroke="#555" /></svg></WindowButton>
              <WindowButton $close aria-label="close"><svg width="8" height="7"><path d="M1 1l6 5M7 1L1 6" stroke="#fff" strokeWidth="2" /></svg></WindowButton>
            </WindowButtons>
          </TitleBar>
          <Menu>{menus.map((m) => <button key={m}>{m}</button>)}</Menu>
        </Header>

        <Toolbar>
          <Tools names={["link", "unlink", "bind"]} />
          <Divider $w={5} />
          <Select label="selection filter" value="全部" width={50} />
          <Tools names={["pick", "pickList", "region", "crossing"]} />
          <Divider $w={6} />
          <Tools names={["move", "rotate", "scale"]} on={["move"]} />
          <Select label="reference coordinates" value="视图" width={50} />
          <Tools names={["pivot"]} />
          <Divider $w={5} />
          <Tools names={["manipulate", "keyboard"]} on={["keyboard"]} />
          <Divider $w={5} />
          <Tools names={["snap", "angle", "percent", "spinnerSnap"]} on={["angle"]} />
          <Divider $w={3} />
          <Tools names={["named"]} />
          <Select label="named selection set" value="创建选择集" width={87} dark />
          <Divider $w={5} />
          <Tools names={["array", "mirror", "align"]} />
          <Divider $w={5} />
          <Tools names={["layers"]} />
          <Divider $w={3} />
          <Tools names={["ribbon", "curve", "schematic"]} on={["ribbon"]} />
          <Divider $w={5} />
          <Tools names={["material"]} />
          <Divider $w={4} />
          <Tools names={["renderSetup", "renderFrame", "render"]} />
          <Divider $w={12} />
        </Toolbar>

        <RibbonTabs>
          <RibbonTab $on $w={42}>建模</RibbonTab>
          <RibbonTab $w={73}>自由形式</RibbonTab>
          <RibbonTab $w={57}>选择</RibbonTab>
          <RibbonTab $w={72}>对象绘制</RibbonTab>
          <RibbonTab $w={56}>填充</RibbonTab>
          <Pill aria-label="ribbon display"><i><Caret $size={2} /></i><Caret $tone="#ccc" $size={2} /></Pill>
        </RibbonTabs>
        <RibbonPanel><span>多边形建模</span></RibbonPanel>

        <Body>
          <LightBar>
            <Grip />
            {lightTools.map((group, i) => (
              <React.Fragment key={i}>
                {i > 0 && <Rule />}
                {group.map((n) => <LightButton key={n} aria-label={n}><Icon name={n} size={19} /></LightButton>)}
              </React.Fragment>
            ))}
          </LightBar>
          <LayoutBar>
            <Grip />
            <Expand aria-label="expand"><Play /></Expand>
            <LayoutButton aria-label="four viewports"><i /><i /><i /><i /></LayoutButton>
          </LayoutBar>

          <Stage>
            <Views>
              <View><TopScene /><ViewLabel>[+][顶][线框]</ViewLabel></View>
              <View $active><FrontScene /><ViewLabel>[+][前][线框]</ViewLabel></View>
              <View><LeftScene /><ViewLabel>[+][左][线框]</ViewLabel></View>
              <View $shaded><PerspectiveScene /><ViewLabel>[+][透视][明暗处理]</ViewLabel></View>
            </Views>
            <TimeSlider>
              <button aria-label="previous frame">&lt;</button>
              <label><input type="range" min={0} max={100} defaultValue={0} aria-label="time" /><output>0 / 100</output></label>
              <button aria-label="next frame">&gt;</button>
            </TimeSlider>
            <TrackBar>
              <TrackButton aria-label="open mini curve editor"><Icon name="track" size={15} /></TrackButton>
              <Frames>
                {Array.from({ length: 101 }, (_, i) => <Frame key={i} $current={i === 0}>{i % 5 === 0 && <span>{i}</span>}</Frame>)}
              </Frames>
            </TrackBar>
          </Stage>

          <Panel>
            <PanelTabs>
              {["create", "modify", "hierarchy", "motion", "display", "hammer"].map((n) => (
                <PanelTab key={n} $on={n === "modify"} aria-label={n}><Icon name={n} size={15} /></PanelTab>
              ))}
            </PanelTabs>
            <NameRow><input aria-label="object name" defaultValue="Line002" /><button aria-label="object colour" /></NameRow>
            <ModifierList>
              <select aria-label="modifier list"><option>修改器列表</option></select>
              <span><i /></span>
            </ModifierList>
            <Modifiers><button>挤出</button><button>倒角</button><button>车削</button><button aria-label="empty slot" /><button aria-label="empty slot" /></Modifiers>
            <Stack><li><i />Line</li></Stack>
            <StackTools>
              <PlainButton aria-label="pin stack"><Icon name="pin" size={12} /></PlainButton>
              <Divider $w={1} />
              <PlainButton aria-label="show end result"><Icon name="tube" size={14} /></PlainButton>
              <Divider $w={1} />
              <PlainButton aria-label="make unique"><Icon name="unique" size={13} /></PlainButton>
              <PlainButton aria-label="remove modifier"><Icon name="trash" size={12} /></PlainButton>
              <Divider $w={1} />
              <PlainButton aria-label="configure"><Icon name="configure" size={13} /></PlainButton>
            </StackTools>
            <Rollout>
              <RolloutClip>
                <RolloutButton $off>焊接</RolloutButton>
                <Threshold><input aria-label="weld threshold" defaultValue="0.1" /><Spinner /></Threshold>
              </RolloutClip>
              <RolloutButton $off>连接</RolloutButton><RolloutButton>插入</RolloutButton>
              <RolloutButton $off>设为首顶点</RolloutButton><RolloutButton $off>熔合</RolloutButton>
              <RolloutButton $off>反转</RolloutButton><RolloutButton $off>循环</RolloutButton>
            </Rollout>
          </Panel>
        </Body>

        <Status>
          <Listener>
            <input aria-label="macro recorder" readOnly />
            <input aria-label="script listener" readOnly value="欢迎使用 MAXScr" />
          </Listener>
          <Prompt>
            <StatusRow>
              <Message>选择了 1 个图形</Message>
              <StatusIcons><Icon name="marker" size={12} /><Icon name="lock" size={12} /><Icon name="absolute" size={12} /></StatusIcons>
              <Coordinate>X:<input defaultValue="48.431" /><Spinner /></Coordinate>
              <Coordinate>Y:<input defaultValue="-0.0" /><Spinner /></Coordinate>
              <Coordinate>Z:<input defaultValue="145.946" /><Spinner /></Coordinate>
            </StatusRow>
            <StatusRow>
              <Message>单击并拖动以选择并移动对象</Message>
              <TagButton aria-label="time tag"><Icon name="copy" size={11} /></TagButton>
            </StatusRow>
          </Prompt>
          <Side><Message>栅格 = 10.0</Message><Message>添加时间标记</Message></Side>
          <KeyButton aria-label="set key"><Icon name="key" size={19} /></KeyButton>
        </Status>
        <TaskBar>{tasks.map((t) => <Task key={t.tone} $w={t.w} $tone={t.tone} />)}</TaskBar>

        <Brand href="#">
          <BrandMark viewBox="0 0 84 70" aria-hidden="true">
            <path d="M7 37l12-5v20q-9-3-12-11z" fill="#1c4593" />
            <path d="M20 25l5-2v29h-5z" fill="#dcdcdc" />
            <path d="M25 14l15-4v42H25z" fill="#1f4f9d" />
            <path d="M40 10l15 8v8l-7 4v20l-8 2z" fill="#dedee0" />
            <path d="M48 29l12-5v22l-12 5z" fill="#1c4593" />
            <path d="M60 24l13 8-13 14z" fill="#d9d9db" />
            <path d="M7 25C20 8 38 1 52 1C72 1 86 10 78 27C78 13 66 6 50 5C36 4 20 12 7 25z" fill="#93c524" />
            <path d="M3 34C-1 50 10 66 29 65C52 62 80 46 81 29C70 46 54 53 40 54C20 56 6 50 3 34z" fill="#173f91" />
          </BrandMark>
          <BrandText><strong>土木工程网</strong><em>www.civilcn.com</em></BrandText>
        </Brand>
      </Window>
    </>
  );
}
